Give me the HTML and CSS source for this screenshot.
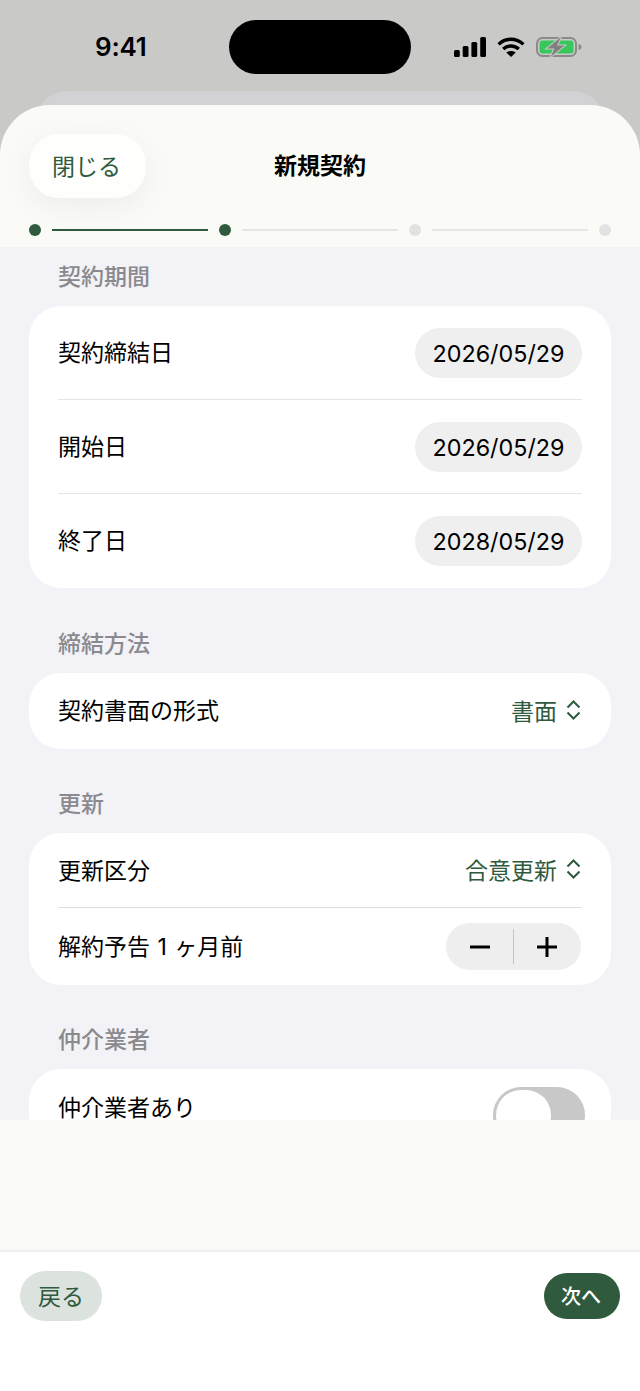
FILE: index.html
```html
<!DOCTYPE html>
<html lang="ja">
<head>
<meta charset="utf-8">
<title>新規契約</title>
<link rel="stylesheet" href="styles.css">
</head>
<body>
<div class="phone">
  <div class="status">
    <span class="time">9:41</span>
    <div class="island"></div>
    <div class="status-icons">
      <svg class="signal" width="32" height="20" viewBox="0 0 32 20"><rect x="0" y="13" width="5.800" height="7" rx="1.500"/><rect x="8.700" y="9" width="5.800" height="11" rx="1.500"/><rect x="17.400" y="5" width="5.800" height="15" rx="1.500"/><rect x="26.200" y="0" width="5.800" height="20" rx="1.500"/></svg>
      <svg class="wifi" width="28" height="20" viewBox="0 0 28 20" fill="none" stroke="#000" stroke-width="3.400"><path d="M1.600 7.400C8.600 .6 19.400 .6 26.400 7.400"/><path d="M6.200 12C10.600 7.900 17.400 7.900 21.800 12"/><path d="M14 20l-4.700-4.600c2.700-2 6.700-2 9.400 0z" fill="#000" stroke="none"/></svg>
      <svg class="battery" width="46" height="20" viewBox="0 0 46 20"><rect x="1" y="1" width="39" height="18" rx="5.500" fill="none" stroke="#8a8a8a" stroke-width="2"/><rect x="3.500" y="3.500" width="34" height="13" rx="3.200" fill="#37c75a"/><path d="M42.500 7c2 .4 3 1.500 3 3s-1 2.600-3 3z" fill="#8a8a8a"/><path class="bolt" d="M25 0L11 11.500h7.500L14.500 20 28.500 8.500H21z"/></svg>
    </div>
  </div>
  <div class="back-sheet"></div>
  <div class="sheet">
    <header class="sheet-head">
      <div class="head-row">
        <button class="close">閉じる</button>
        <h1 class="title">新規契約</h1>
      </div>
      <div class="steps">
        <span class="dot on"></span><span class="line on"></span>
        <span class="dot on"></span><span class="line"></span>
        <span class="dot"></span><span class="line"></span>
        <span class="dot"></span>
      </div>
    </header>
    <main class="content">
      <section class="group">
        <h2 class="group-title">契約期間</h2>
        <div class="card">
          <div class="row tall"><span class="label">契約締結日</span><span class="date">2026/05/29</span></div>
          <div class="row tall"><span class="label">開始日</span><span class="date">2026/05/29</span></div>
          <div class="row tall"><span class="label">終了日</span><span class="date">2028/05/29</span></div>
        </div>
      </section>
      <section class="group">
        <h2 class="group-title">締結方法</h2>
        <div class="card">
          <div class="row single"><span class="label">契約書面の形式</span><span class="picker">書面<svg class="chev" width="15" height="20" viewBox="0 0 15 20" fill="none"><path d="M1.500 7.500L7.500 1.500l6 6M1.500 12.500l6 6 6-6"/></svg></span></div>
        </div>
      </section>
      <section class="group">
        <h2 class="group-title">更新</h2>
        <div class="card">
          <div class="row mid"><span class="label">更新区分</span><span class="picker">合意更新<svg class="chev" width="15" height="20" viewBox="0 0 15 20" fill="none"><path d="M1.500 7.500L7.500 1.500l6 6M1.500 12.500l6 6 6-6"/></svg></span></div>
          <div class="row low"><span class="label notice">解約予告 1 ヶ月前</span>
            <div class="stepper">
              <svg width="20" height="20" viewBox="0 0 20 20"><path d="M0 10h20" stroke="#000" stroke-width="3"/></svg>
              <span class="stepper-div"></span>
              <svg width="20" height="20" viewBox="0 0 20 20"><path d="M0 10h20M10 0v20" stroke="#000" stroke-width="3"/></svg>
            </div>
          </div>
        </div>
      </section>
      <section class="group">
        <h2 class="group-title">仲介業者</h2>
        <div class="card">
          <div class="row broker"><span class="label">仲介業者あり</span><span class="toggle"><span class="knob"></span></span></div>
        </div>
      </section>
    </main>
    <div class="spacer"></div>
    <footer class="foot">
      <button class="back">戻る</button>
      <button class="next">次へ</button>
    </footer>
  </div>
</div>
</body>
</html>
```
FILE: styles.css
```css
* { box-sizing: border-box; }
html, body { margin: 0; padding: 0; }
body {
  font-family: Inter, "Noto Sans CJK JP", sans-serif;
  font-size: 23px;
  color: #000;
  background: #c9c9c7;
}
.phone { width: 640px; height: 1391px; overflow: hidden; display: flex; flex-direction: column; }
.status { height: 91px; flex: none; display: flex; align-items: flex-start; }
.time { margin: 30px 0 0 95px; font-size: 26px; font-weight: 600; line-height: 34px; width: 134px; letter-spacing: -.2px; }
.island { width: 182px; height: 54px; margin-top: 20px; border-radius: 27px; background: #000; }
.status-icons { display: flex; margin: 37px 0 0 43px; }
.signal { fill: #000; }
.wifi { margin-left: 11px; }
.battery { margin-left: 11px; overflow: visible; }
.bolt { fill: #808080; stroke: #c9c9c7; stroke-width: 2; paint-order: stroke; }
.back-sheet { flex: none; height: 54px; margin: 0 34px -40px; border-radius: 34px 34px 0 0; background: #d2d2d4; }
.sheet {
  flex: 1; min-height: 0; position: relative; display: flex; flex-direction: column;
  background: #fafbf6; border-radius: 50px 50px 0 0; overflow: hidden;
}
.sheet-head { flex: none; height: 142px; padding: 29px 29px 0; }
.head-row { height: 64px; display: flex; align-items: center; position: relative; }
.close {
  width: 117px; height: 64px; border: 0; border-radius: 30px; background: #fefefc;
  font: inherit; color: #2f5a3e; box-shadow: 0 8px 30px rgba(0,0,0,.055); padding: 0 2px 3px 0;
}
.title { position: absolute; left: 0; right: 0; top: 0; margin: 0; text-align: center; font-size: 23px; font-weight: 700; line-height: 64px; }
.steps { display: flex; align-items: center; margin-top: 22px; gap: 11px; height: 20px; }
.dot { flex: none; width: 12px; height: 12px; border-radius: 50%; background: #e2e2e2; }
.dot.on { background: #2f5a3e; }
.line { flex: 1; height: 2px; background: #e6e6e6; }
.line.on { background: #2f5a3e; }
.content { flex: none; height: 873px; overflow: hidden; background: #f2f2f7; padding: 14px 29px 0; display: flex; flex-direction: column; gap: 39px; }
.group:first-child { margin-bottom: 1px; }
.group-title { margin: -1px 0 12px; padding: 0 0 0 29px; font-size: 23px; font-weight: 500; line-height: 34px; color: #8a8a8e; }
.card { background: #fff; border-radius: 32px; padding: 0 29px; }
.row { display: flex; align-items: center; justify-content: space-between; }
.label { padding-bottom: 4px; }
.notice { word-spacing: 1px; }
.row.tall { height: 94px; }
.row.tall + .row.tall { box-shadow: 0 -1px 0 #e5e5e5; }
.row.single { height: 76px; }
.row.mid { height: 75px; border-bottom: 1px solid #e0e0e0; }
.row.mid .label { padding-bottom: 2px; }
.row.low { height: 77px; margin-right: 1px; }
.row.broker { height: 76px; margin-right: -3px; }
.row.broker .label { padding-bottom: 2px; }
.date { width: 167px; height: 50px; border-radius: 25px; background: #efefef; font-size: 23.300px; line-height: 51px; text-align: center; }
.picker { display: flex; align-items: center; gap: 9px; color: #2f5a3e; margin-right: 1px; padding-bottom: 3px; }
.chev { stroke: #2f5a3e; stroke-width: 2; }
.stepper { width: 135px; height: 47px; border-radius: 24px; background: #eeeeee; display: flex; align-items: center; justify-content: space-between; padding: 0 24px; }
.stepper-div { width: 1px; height: 35px; background: #c4c4c4; }
.toggle { width: 92px; height: 56px; border-radius: 28px; background: #c8c8c8; padding: 3px; margin-top: 15px; }
.knob { display: block; width: 55px; height: 50px; border-radius: 25px; background: #fff; }
.spacer { flex: none; height: 132px; background: #fafbf6; border-bottom: 2px solid #efefef; }
.foot { flex: 1; background: #fff; display: flex; align-items: flex-start; justify-content: space-between; padding: 19px 20px 0; }
.back { width: 82px; height: 50px; border: 0; border-radius: 25px; background: #dce2de; color: #2f5a3e; font: inherit; padding: 0 0 3px; }
.next { width: 76px; height: 46px; margin-top: 2px; border: 0; border-radius: 23px; background: #2f5a3e; color: #fff; font: inherit; font-size: 20px; font-weight: 500; padding: 0 2px 2px 0; }
```
